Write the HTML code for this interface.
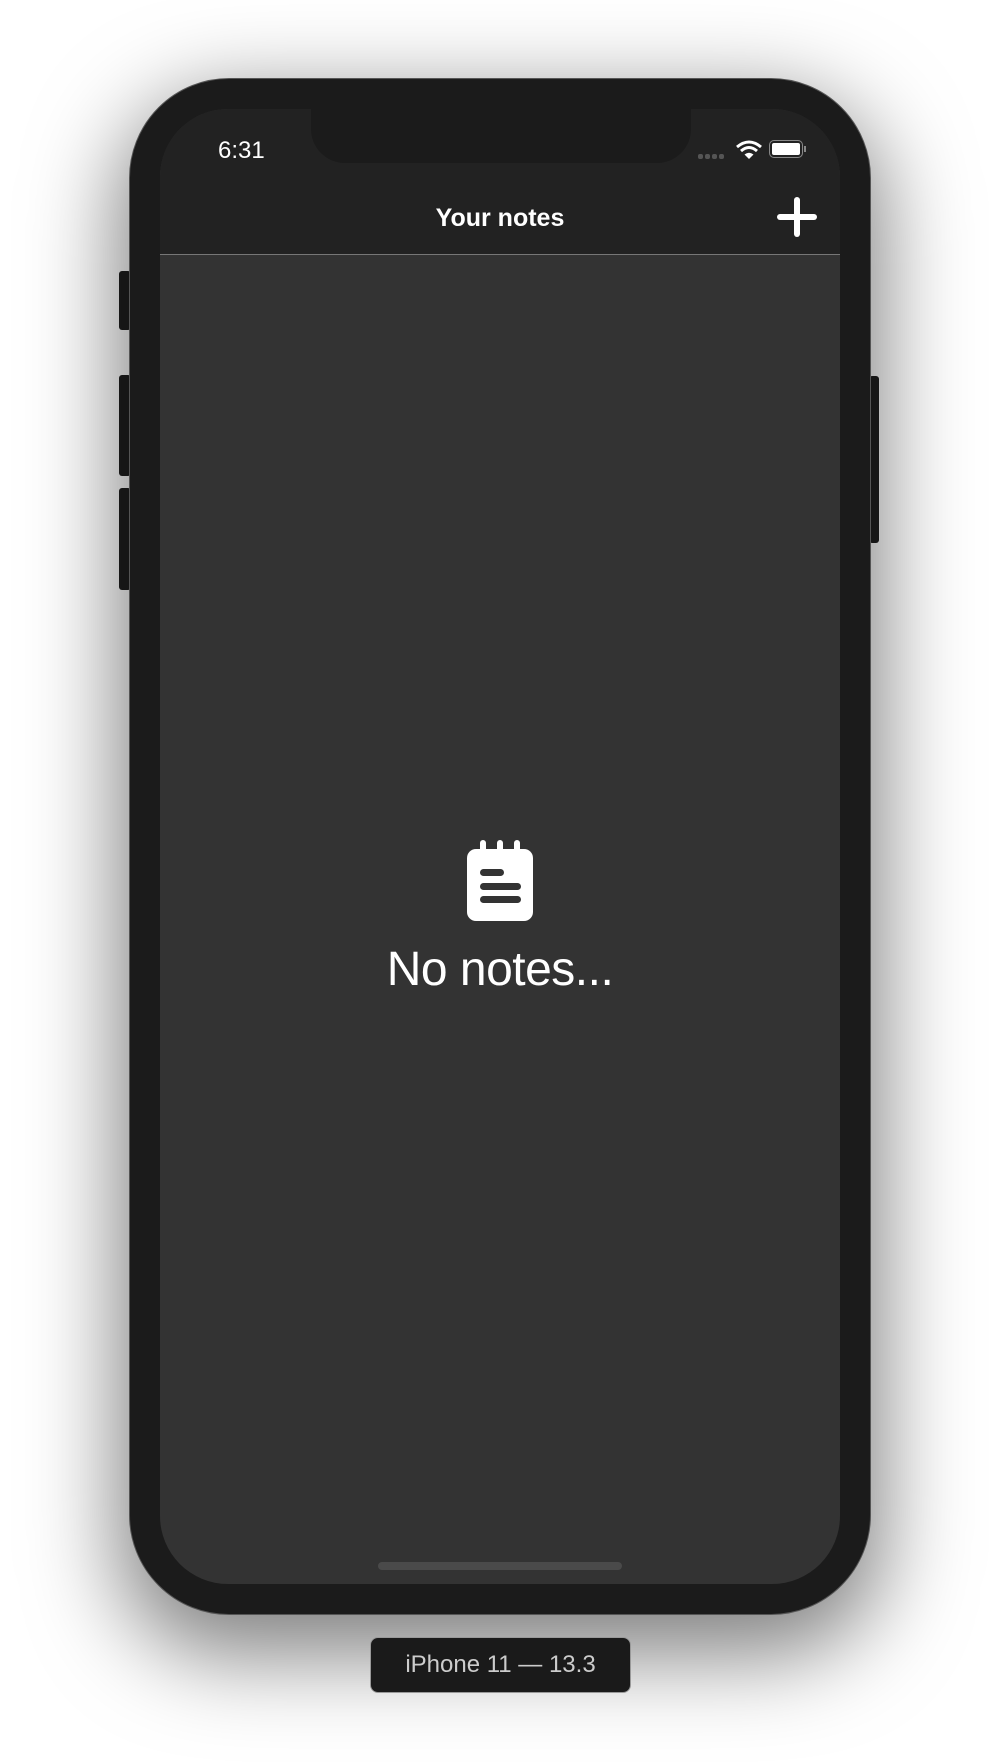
<!DOCTYPE html>
<html><head><meta charset="utf-8"><style>
html,body{margin:0;padding:0;background:#fff;width:1000px;height:1762px;overflow:hidden;font-family:"Liberation Sans",sans-serif}
.phone{position:absolute;left:129px;top:78px;width:742px;height:1537px;background:#1b1b1b;border-radius:100px;box-shadow:0 30px 90px 10px rgba(0,0,0,.5);border:1px solid #555;box-sizing:border-box}
.btn{position:absolute;background:#1f1f1f;border-radius:3px}
.screen{position:absolute;left:160px;top:109px;width:680px;height:1475px;background:#333;border-radius:68px;overflow:hidden}
.nav{position:absolute;left:0;top:0;width:680px;height:145px;background:#222;border-bottom:1px solid #777}
.notch{position:absolute;left:151px;top:0;width:380px;height:54px;background:#1b1b1b;border-radius:0 0 34px 34px}
.t{position:absolute;color:#fff}
</style></head><body>
<div class="btn" style="left:119px;top:271px;width:12px;height:59px"></div>
<div class="btn" style="left:119px;top:375px;width:12px;height:101px"></div>
<div class="btn" style="left:119px;top:488px;width:12px;height:102px"></div>
<div class="btn" style="left:869px;top:376px;width:10px;height:167px"></div>
<div class="phone"></div>
<div class="screen">
 <div class="nav"></div>
 <div class="notch"></div>
 <div class="t" style="left:58px;top:28px;font-size:24px">6:31</div>
 <div style="position:absolute;left:538px;top:45px;width:5px;height:5px;background:#555;border-radius:2px;box-shadow:7px 0 #555,14px 0 #555,21px 0 #555"></div>
 <svg style="position:absolute;left:575px;top:30px" width="28" height="22" viewBox="0 0 28 22"><path d="M2 8 Q14 -2 26 8" stroke="#fff" stroke-width="3" fill="none"/><path d="M6 12 Q14 5 22 12" stroke="#fff" stroke-width="3" fill="none"/><path d="M14 20 L9.5 15.5 Q14 12 18.5 15.5Z" fill="#fff"/></svg>
 <div style="position:absolute;left:609px;top:31px;width:34px;height:18px;border:1.5px solid #888;border-radius:5px;box-sizing:border-box;padding:2px"><div style="width:100%;height:100%;background:#fff;border-radius:2px"></div></div>
 <div style="position:absolute;left:644px;top:37px;width:2px;height:6px;background:#888"></div>
 <div class="t" style="left:0;width:680px;text-align:center;top:94px;font-size:25px;font-weight:bold;line-height:30px">Your notes</div>
 <div style="position:absolute;left:617px;top:105px;width:40px;height:6px;background:#fff;border-radius:3px"></div>
 <div style="position:absolute;left:634px;top:88px;width:6px;height:40px;background:#fff;border-radius:3px"></div>
 <svg style="position:absolute;left:306px;top:730px" width="70" height="84" viewBox="0 0 70 84"><rect x="1" y="10" width="66" height="72" rx="9" fill="#fff"/><rect x="14" y="1" width="6" height="14" rx="3" fill="#fff"/><rect x="31" y="1" width="6" height="14" rx="3" fill="#fff"/><rect x="48" y="1" width="6" height="14" rx="3" fill="#fff"/><rect x="14" y="30" width="24" height="7" rx="3.5" fill="#333"/><rect x="14" y="44" width="41" height="7" rx="3.5" fill="#333"/><rect x="14" y="57" width="41" height="7" rx="3.5" fill="#333"/></svg>
 <div class="t" style="left:0;width:680px;text-align:center;top:833px;font-size:48px;line-height:56px;letter-spacing:-0.5px">No notes...</div>
 <div style="position:absolute;left:218px;top:1453px;width:244px;height:8px;background:#4a4a4a;border-radius:4px"></div>
</div>
<div style="position:absolute;left:370px;top:1637px;width:261px;height:56px;background:#1a1a1a;border-radius:8px;border:1px solid #999;box-sizing:border-box;color:#ccc;font-size:24px;text-align:center;line-height:54px">iPhone 11 — 13.3</div>
</body></html>
